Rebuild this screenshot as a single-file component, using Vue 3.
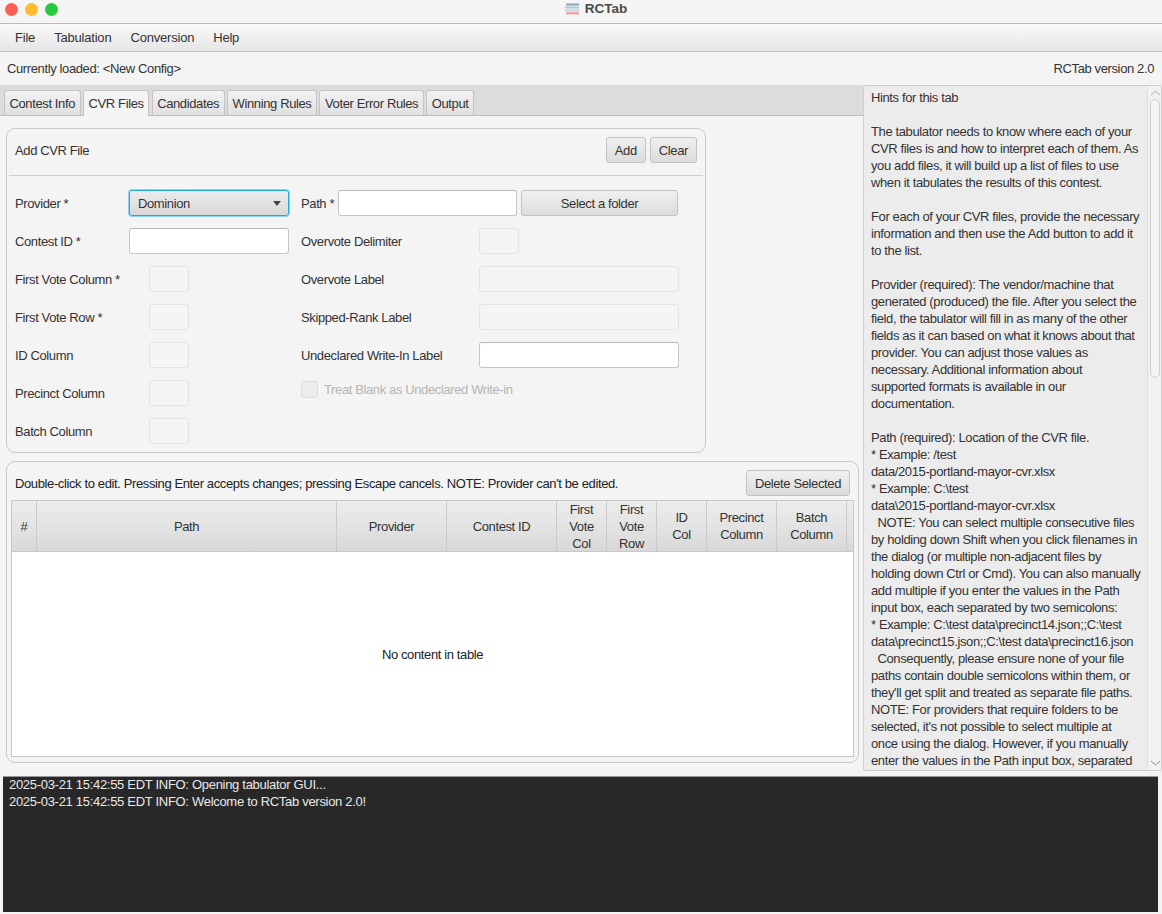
<script setup>
const menus = ["File", "Tabulation", "Conversion", "Help"];
const tabs = ["Contest Info", "CVR Files", "Candidates", "Winning Rules", "Voter Error Rules", "Output"];

const leftRows = [
  { label: "Contest ID *", kind: "wide" },
  { label: "First Vote Column *", kind: "small" },
  { label: "First Vote Row *", kind: "small" },
  { label: "ID Column", kind: "small" },
  { label: "Precinct Column", kind: "small" },
  { label: "Batch Column", kind: "small" },
];

const columns = [
  { title: "#", width: 25 },
  { title: "Path", width: 300 },
  { title: "Provider", width: 110 },
  { title: "Contest ID", width: 110 },
  { title: "First\nVote\nCol", width: 50 },
  { title: "First\nVote\nRow", width: 50 },
  { title: "ID\nCol", width: 50 },
  { title: "Precinct\nColumn", width: 70 },
  { title: "Batch\nColumn", width: 70 },
];

const hints = `Hints for this tab

The tabulator needs to know where each of your
CVR files is and how to interpret each of them. As
you add files, it will build up a list of files to use
when it tabulates the results of this contest.

For each of your CVR files, provide the necessary
information and then use the Add button to add it
to the list.

Provider (required): The vendor/machine that
generated (produced) the file. After you select the
field, the tabulator will fill in as many of the other
fields as it can based on what it knows about that
provider. You can adjust those values as
necessary. Additional information about
supported formats is available in our
documentation.

Path (required): Location of the CVR file.
* Example: /test
data/2015-portland-mayor-cvr.xlsx
* Example: C:\\test
data\\2015-portland-mayor-cvr.xlsx
  NOTE: You can select multiple consecutive files
by holding down Shift when you click filenames in
the dialog (or multiple non-adjacent files by
holding down Ctrl or Cmd). You can also manually
add multiple if you enter the values in the Path
input box, each separated by two semicolons:
* Example: C:\\test data\\precinct14.json;;C:\\test
data\\precinct15.json;;C:\\test data\\precinct16.json
  Consequently, please ensure none of your file
paths contain double semicolons within them, or
they'll get split and treated as separate file paths.
NOTE: For providers that require folders to be
selected, it's not possible to select multiple at
once using the dialog. However, if you manually
enter the values in the Path input box, separated`;
</script>

<template>
  <div class="window">
    <header class="titlebar">
      <div class="lights">
        <span class="light red"></span>
        <span class="light yellow"></span>
        <span class="light green"></span>
      </div>
      <div class="title">
        <svg width="15" height="12" viewBox="0 0 15 12">
          <rect x="1" y="0.5" width="13" height="2" fill="#8fa3b5" />
          <rect x="0" y="3.5" width="14" height="2" fill="#a9cbd4" />
          <rect x="0" y="6.5" width="14" height="2" fill="#c9d4da" />
          <rect x="1" y="9" width="13" height="2.5" fill="#e8a9ad" />
        </svg>
        <span>RCTab</span>
      </div>
    </header>

    <nav class="menubar">
      <span v-for="menu in menus" :key="menu" class="menu">{{ menu }}</span>
    </nav>

    <div class="statusbar">
      <span>Currently loaded: &lt;New Config&gt;</span>
      <span>RCTab version 2.0</span>
    </div>

    <div class="main">
      <section class="left">
        <div class="tabstrip">
          <span v-for="tab in tabs" :key="tab" class="tab" :class="{ active: tab === 'CVR Files' }">{{ tab }}</span>
        </div>

        <div class="pane">
          <div class="card add-card">
            <div class="add-head">
              <span>Add CVR File</span>
              <div class="head-buttons">
                <button class="btn">Add</button>
                <button class="btn">Clear</button>
              </div>
            </div>

            <div class="form">
              <div class="form-col left-col">
                <div class="row">
                  <label class="label-wide">Provider *</label>
                  <div class="select">
                    <span>Dominion</span>
                    <i class="caret"></i>
                  </div>
                </div>
                <div v-for="row in leftRows" :key="row.label" class="row">
                  <label :class="row.kind === 'wide' ? 'label-wide' : 'label-small'">{{ row.label }}</label>
                  <input v-if="row.kind === 'wide'" class="input wide" />
                  <input v-else class="input small off" disabled />
                </div>
              </div>

              <div class="form-col right-col">
                <div class="row">
                  <label class="label-path">Path *</label>
                  <input class="input path" />
                  <button class="btn folder">Select a folder</button>
                </div>
                <div class="row">
                  <label class="label-right">Overvote Delimiter</label>
                  <input class="input small off" disabled />
                </div>
                <div class="row">
                  <label class="label-right">Overvote Label</label>
                  <input class="input long off" disabled />
                </div>
                <div class="row">
                  <label class="label-right">Skipped-Rank Label</label>
                  <input class="input long off" disabled />
                </div>
                <div class="row">
                  <label class="label-right">Undeclared Write-In Label</label>
                  <input class="input long" />
                </div>
                <div class="row check-row">
                  <span class="check"></span>
                  <span>Treat Blank as Undeclared Write-in</span>
                </div>
              </div>
            </div>
          </div>

          <div class="card table-card">
            <div class="table-head">
              <span>Double-click to edit. Pressing Enter accepts changes; pressing Escape cancels. NOTE: Provider can't be edited.</span>
              <button class="btn">Delete Selected</button>
            </div>
            <div class="table">
              <div class="thead">
                <div
                  v-for="col in columns"
                  :key="col.title"
                  class="th"
                  :style="{ width: col.width + 'px' }"
                >{{ col.title }}</div>
                <div class="th filler"></div>
              </div>
              <div class="tbody">No content in table</div>
            </div>
          </div>
        </div>
      </section>

      <aside class="hints">
        <div class="hints-text">{{ hints }}</div>
        <div class="scrollbar">
          <svg class="arrow" width="11" height="6" viewBox="0 0 11 6">
            <path d="M1 5 L5.5 1 L10 5" fill="none" stroke="#a8a8a8" stroke-width="1" />
          </svg>
          <div class="track"><div class="thumb"></div></div>
          <svg class="arrow" width="11" height="6" viewBox="0 0 11 6">
            <path d="M1 1 L5.5 5 L10 1" fill="none" stroke="#8c8c8c" stroke-width="1" />
          </svg>
        </div>
      </aside>
    </div>

    <div class="log">
      <div>2025-03-21 15:42:55 EDT INFO: Opening tabulator GUI...</div>
      <div>2025-03-21 15:42:55 EDT INFO: Welcome to RCTab version 2.0!</div>
    </div>
  </div>
</template>

<style>
html,
body {
  margin: 0;
  background: #f4f4f4;
}
</style>

<style scoped>
.window {
  width: 1162px;
  height: 914px;
  overflow: hidden;
  display: flex;
  flex-direction: column;
  background: #f4f4f4;
  color: #333;
  font-family: "Liberation Sans", Arial, sans-serif;
  font-size: 13px;
  letter-spacing: -0.38px;
}

.titlebar {
  height: 23px;
  flex: none;
  position: relative;
  display: flex;
  justify-content: center;
  background: #f5f5f5;
  border-bottom: 1px solid #bdbdbd;
}
.lights {
  position: absolute;
  left: 5px;
  top: 3px;
  display: flex;
  gap: 7px;
}
.light {
  width: 13px;
  height: 13px;
  border-radius: 50%;
}
.red { background: #ff5f57; }
.yellow { background: #febc2e; }
.green { background: #28c840; }
.title {
  display: flex;
  align-items: center;
  gap: 5px;
  height: 17px;
  margin-left: 30px;
  font-size: 13.5px;
  font-weight: 700;
  letter-spacing: 0;
  color: #4a4a4a;
}

.menubar {
  height: 27px;
  flex: none;
  display: flex;
  align-items: center;
  padding-left: 15px;
  gap: 19px;
  letter-spacing: -0.2px;
  background: linear-gradient(#f9f9f9, #e6e6e6);
  border-bottom: 1px solid #c4c4c4;
}

.statusbar {
  height: 33px;
  flex: none;
  box-sizing: border-box;
  display: flex;
  align-items: center;
  justify-content: space-between;
  padding: 0 8px 0 7px;
}

.main {
  height: 687px;
  flex: none;
  display: flex;
}

.left {
  width: 863px;
  flex: none;
  display: flex;
  flex-direction: column;
}
.tabstrip {
  height: 31px;
  flex: none;
  box-sizing: border-box;
  display: flex;
  align-items: flex-end;
  gap: 2.5px;
  padding-left: 4px;
  background: #dcdcdc;
  border-bottom: 1px solid #bdbdbd;
}
.tab {
  height: 25px;
  box-sizing: border-box;
  padding: 0 4.5px;
  display: flex;
  align-items: center;
  border: 1px solid #c4c4c4;
  border-bottom: 0;
  border-radius: 3px 3px 0 0;
  background: linear-gradient(#f2f2f2, #e0e0e0);
}
.tab.active {
  background: #f4f4f4;
  height: 26px;
  margin-bottom: -1px;
}

.pane {
  flex: 1;
  display: flex;
  flex-direction: column;
  padding: 12px 4px 0 6px;
}
.card {
  box-sizing: border-box;
  border: 1px solid #c8c8c8;
  border-radius: 9px;
}
.add-card {
  width: 700px;
  height: 325px;
}
.add-head {
  height: 47px;
  margin: 0 2px;
  padding: 0 6px 4px 6px;
  box-sizing: border-box;
  display: flex;
  align-items: center;
  justify-content: space-between;
  border-bottom: 1px solid #d0d0d0;
}
.head-buttons {
  display: flex;
  gap: 4px;
}
.btn {
  height: 26px;
  box-sizing: border-box;
  padding: 0 8px;
  font: inherit;
  letter-spacing: inherit;
  color: inherit;
  white-space: nowrap;
  border: 1px solid #c2c2c2;
  border-radius: 3px;
  background: linear-gradient(#f0f0f0, #dcdcdc);
}

.form {
  display: flex;
  gap: 12px;
  padding: 14px 0 0 8px;
}
.form-col {
  display: flex;
  flex-direction: column;
  gap: 12px;
}
.left-col { width: 274px; }
.row {
  height: 26px;
  display: flex;
  align-items: center;
  white-space: nowrap;
}
.label-wide { width: 114px; flex: none; }
.label-small { width: 134px; flex: none; }
.label-right { width: 178px; flex: none; }
.label-path { width: 37px; flex: none; }

.input {
  height: 26px;
  box-sizing: border-box;
  padding: 0 6px;
  background: #fff;
  border: 1px solid #c6c6c6;
  border-top-color: #b8b8b8;
  border-radius: 3px;
  outline: none;
}
.input.off {
  background: #f5f5f5;
  border-color: #e4e4e4;
}
.wide { width: 160px; }
.small { width: 40px; }
.long { width: 200px; }
.path { width: 179px; }
.folder {
  width: 157px;
  margin-left: 4px;
}
.select {
  width: 160px;
  height: 26px;
  box-sizing: border-box;
  padding: 0 8px;
  display: flex;
  align-items: center;
  justify-content: space-between;
  background: linear-gradient(#ececec, #d9d9d9);
  border: 1px solid #1fa8dc;
  border-radius: 3px;
  box-shadow: 0 0 0 1px #8fd3ee;
}
.caret {
  width: 0;
  height: 0;
  margin-right: -1px;
  border-left: 4px solid transparent;
  border-right: 4px solid transparent;
  border-top: 5px solid #444;
}
.check-row {
  gap: 6px;
  color: #b5b5b5;
  margin-top: -4px;
}
.check {
  width: 17px;
  height: 17px;
  box-sizing: border-box;
  border: 1px solid #dcdcdc;
  border-radius: 3px;
  background: #ececec;
}

.table-card {
  width: 853px;
  height: 302px;
  margin-top: 8px;
  padding: 0 4px 5px 4px;
  display: flex;
  flex-direction: column;
}
.table-head {
  height: 38px;
  flex: none;
  box-sizing: border-box;
  padding: 4px 4px 0 4px;
  display: flex;
  align-items: center;
  justify-content: space-between;
  color: #222;
}
.table-head .btn {
  color: #333;
}
.table {
  flex: 1;
  display: flex;
  flex-direction: column;
  border: 1px solid #c8c8c8;
  background: #fff;
}
.thead {
  height: 51px;
  flex: none;
  box-sizing: border-box;
  display: flex;
  border-bottom: 1px solid #c8c8c8;
}
.th {
  box-sizing: border-box;
  flex: none;
  display: flex;
  align-items: center;
  justify-content: center;
  text-align: center;
  white-space: pre;
  line-height: 17px;
  background: linear-gradient(#ededed, #d9d9d9);
  border-right: 1px solid #cacaca;
}
.th.filler {
  flex: 1;
  border-right: 0;
}
.tbody {
  flex: 1;
  display: flex;
  align-items: center;
  justify-content: center;
  color: #222;
}

.hints {
  flex: 1;
  box-sizing: border-box;
  display: flex;
  height: 686px;
  background: #ececec;
  border: 1px solid #cfcfcf;
  border-radius: 2px;
  overflow: hidden;
}
.hints-text {
  width: 283px;
  flex: none;
  box-sizing: border-box;
  padding: 3px 0 0 7px;
  white-space: pre;
  line-height: 17px;
  overflow: hidden;
}
.scrollbar {
  flex: 1;
  display: flex;
  flex-direction: column;
  align-items: center;
  padding: 4px 0;
  background: #f2f2f2;
  border-left: 1px solid #dedede;
}
.arrow { flex: none; }
.track {
  flex: 1;
  width: 100%;
  padding: 3px 2px;
  box-sizing: border-box;
}
.thumb {
  width: 10px;
  height: 279px;
  box-sizing: border-box;
  margin-left: auto;
  border: 1px solid #cfcfcf;
  border-radius: 5px;
  background: #f4f4f4;
}

.log {
  margin: 4px 4px 0 3px;
  height: 136px;
  flex: none;
  box-sizing: border-box;
  padding: 0 6px;
  background: #282828;
  color: #e8e8e8;
  line-height: 17px;
  letter-spacing: -0.3px;
  box-shadow: inset 0 1px 0 #999;
}
</style>
